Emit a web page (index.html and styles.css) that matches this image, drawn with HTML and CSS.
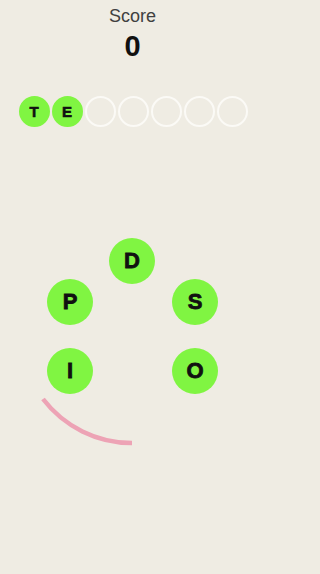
FILE: index.html
```html
<!DOCTYPE html>
<html>
<head>
<meta charset="utf-8">
<link rel="stylesheet" href="styles.css">
</head>
<body>
<div class="app">
  <header class="score">
    <div class="score-label">Score</div>
    <div class="score-value">0</div>
  </header>
  <div class="slots">
    <div class="slot filled">T</div>
    <div class="slot filled">E</div>
    <div class="slot"></div>
    <div class="slot"></div>
    <div class="slot"></div>
    <div class="slot"></div>
    <div class="slot"></div>
  </div>
  <div class="wheel">
    <svg class="arc" width="265" height="230" viewBox="0 0 265 230">
      <path d="M43 169 A112 112 0 0 0 132 213" fill="none" stroke="#eda3b5" stroke-width="4.5"/>
    </svg>
    <div class="key key-d">D</div>
    <div class="key key-p">P</div>
    <div class="key key-s">S</div>
    <div class="key key-i">I</div>
    <div class="key key-o">O</div>
  </div>
</div>
</body>
</html>
```
FILE: styles.css
```css
html, body {
  margin: 0;
  padding: 0;
  background: #efece3;
}
.app {
  width: 265px;
  height: 574px;
  display: flex;
  flex-direction: column;
  align-items: stretch;
  font-family: "Liberation Sans", Arial, sans-serif;
}
.score {
  padding-top: 5px;
  display: flex;
  flex-direction: column;
  align-items: center;
}
.score-label {
  font-size: 18px;
  line-height: 22px;
  color: #404040;
}
.score-value {
  margin-top: 3px;
  font-size: 29px;
  line-height: 32px;
  font-weight: bold;
  color: #111;
}
.slots {
  margin-top: 34px;
  display: flex;
  justify-content: center;
  gap: 2px;
  padding-left: 1px;
}
.slot {
  width: 31px;
  height: 31px;
  box-sizing: border-box;
  border-radius: 50%;
  border: 2px solid #fbfaf6;
  display: flex;
  align-items: center;
  justify-content: center;
  font-family: "Liberation Sans", Arial, sans-serif;
  font-weight: bold;
  -webkit-text-stroke: 0.6px #111;
  font-size: 15px;
  color: #111;
}
.slot.filled {
  background: #80f542;
  border-color: #80f542;
}
.wheel {
  position: relative;
  margin-top: 103px;
  height: 230px;
}
.arc {
  position: absolute;
  left: 0;
  top: 0;
}
.key {
  position: absolute;
  width: 46px;
  height: 46px;
  border-radius: 50%;
  background: #80f542;
  display: flex;
  align-items: center;
  justify-content: center;
  font-family: "Liberation Sans", Arial, sans-serif;
  font-weight: bold;
  -webkit-text-stroke: 0.8px #111;
  font-size: 22px;
  color: #111;
}
.key-d { left: 109px; top: 8px; }
.key-p { left: 47px; top: 49px; }
.key-s { left: 172px; top: 49px; }
.key-i { left: 47px; top: 118px; }
.key-o { left: 172px; top: 118px; }
```
